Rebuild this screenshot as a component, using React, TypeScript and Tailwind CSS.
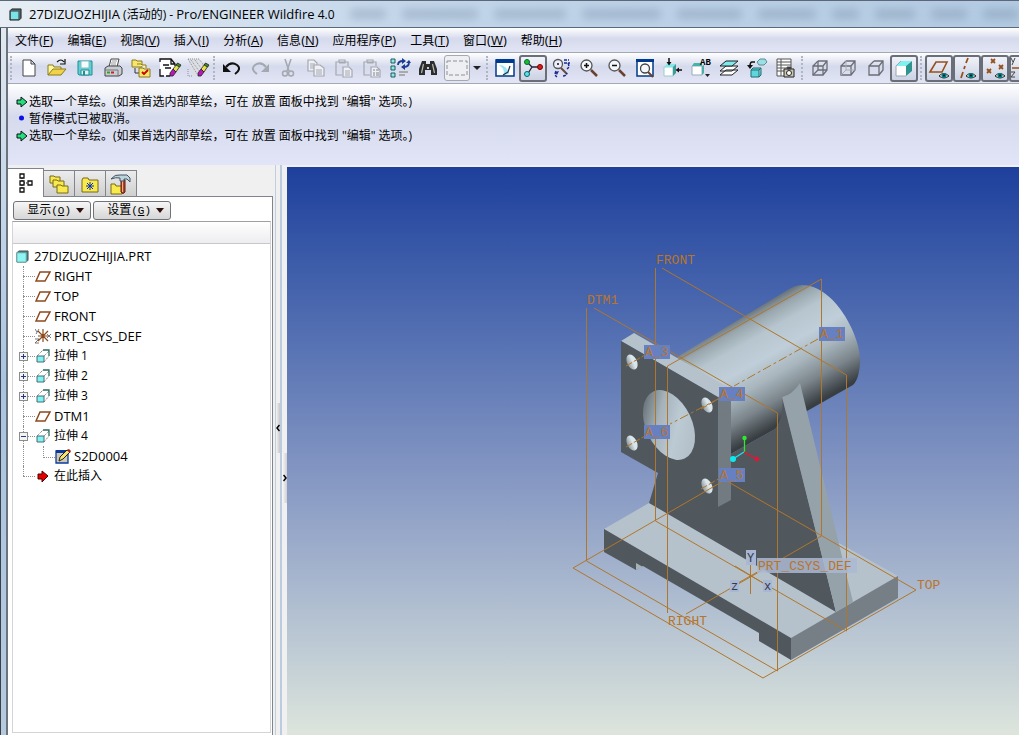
import React, { useState } from 'react';

type IconMap = Record<string, React.ReactNode>;

interface ToolItem {
  id: string;
  label: string;
  pressed?: boolean;
}

interface TreeItem {
  name: string;
  icon: string;
  expander?: '+' | '-';
  child?: boolean;
  last?: boolean;
}

const FONT = "font-['Open_Sans','Noto_Sans_CJK_SC',sans-serif]";

const eye = (
  <g stroke="none">
    <path d="M7 18q4.500-5 10 0q-5 4-10 0z" fill="#fff" stroke="#222" strokeWidth="1" />
    <circle cx="12" cy="17.500" r="2.600" fill="#008080" />
    <circle cx="12" cy="17.500" r="1" fill="#012" />
  </g>
);

const wireBox = (
  <path d="M3 8h10v9H3zM8 3h9v9l-4 5M3 8l5-5M13 8l4-5" fill="none" stroke="#6b6e75" strokeWidth="1.300" />
);

const marker = (
  <g strokeWidth="0.800">
    <path d="M14 11l4-5 3 2-4 6z" fill="#e8e24a" stroke="#222" />
    <path d="M11 15l3-4 3 3-3 4h-3z" fill="#b818b8" stroke="#222" />
    <path d="M17 7l1.500-2L22 7l-1.500 2z" fill="#3c8a2c" stroke="#222" />
  </g>
);

const clipboard = (
  <g fill="none" stroke="#a4a8b0" strokeWidth="1.200">
    <path d="M8 17H2V4h12v4M5 4V2h6v3H5" />
    <path d="M9 9h6l3 3v7H9z" fill="#eef0f5" />
  </g>
);

const icons: IconMap = {
  new: <path d="M4 2h8l4 4v12H4zM12 2v4h4" fill="#fff" stroke="#444" />,
  open: (
    <g>
      <path d="M1 17V7h5l1 2h7v3" fill="#fff6a0" stroke="#8b7b1c" />
      <path d="M1 17l5-6h13l-5 6z" fill="#f2d24a" stroke="#8b7b1c" />
      <path d="M10 4q4-4 7 0M18 1v5h-5" fill="none" stroke="#111" strokeWidth="1.200" />
    </g>
  ),
  save: (
    <g stroke="#1b8f94">
      <path d="M3 3h14v14H4l-1-1z" fill="#63cfd2" />
      <path d="M6 3h8v7H6z" fill="#f4fbfb" stroke="#8bc" />
      <path d="M6 12h8v5H6z" fill="#e8eef2" />
      <path d="M8 13h2v4H8z" fill="#1b8f94" stroke="none" />
    </g>
  ),
  print: (
    <g stroke="#444">
      <path d="M6 9l2-8h8l-2 8z" fill="#fff" />
      <path d="M9 3h5M8 5h5M8 7h5" stroke="#999" />
      <path d="M2 10l3-2h12l2 2v6l-3 2H2z" fill="#c9ccd4" />
      <path d="M2 12h13v6" fill="none" stroke="#777" />
      <path d="M4 14.500h3" stroke="#2a2" strokeWidth="2" />
      <path d="M8 14.500h3" stroke="#c22" strokeWidth="2" />
    </g>
  ),
  folders: (
    <g stroke="#8b7b1c">
      <path d="M1 2h4l1 1h5v6H1z" fill="#f7e66c" />
      <path d="M4 10v5h4" fill="none" stroke="#333" />
      <path d="M6 6h4l1 1h4v3" fill="#fff6a0" />
      <path d="M8 10h4l1 1h6v8H8z" fill="#f7e66c" />
      <path d="M11 14l2 2 4-4" fill="none" stroke="#c00" strokeWidth="1.800" />
    </g>
  ),
  sheetEdit: (
    <g>
      <path d="M1 1h11l4 5v3L9 18H1z" fill="#fff" />
      <path d="M1 4V1h11l4 5v2M12 1v5h4M1 11v7h4M4 7h6M6 10h6M7 18h4" fill="none" stroke="#111" strokeWidth="1.300" />
      {marker}
    </g>
  ),
  sheetErase: (
    <g>
      <path d="M1 1h11l4 5v3L9 18H6z" fill="#dcdee4" />
      <path d="M1 1h11l4 5v2M1 1l9 15M4 2l8 11M8 2l6 8M1 11v7h4" fill="none" stroke="#8d9099" strokeDasharray="1 1" />
      {marker}
    </g>
  ),
  undo: (
    <g>
      <path d="M4 9q5-6 11-2q5 4-2 9" fill="none" stroke="#111" strokeWidth="2" />
      <path d="M1 6v8h8z" fill="#111" />
    </g>
  ),
  redo: (
    <g>
      <path d="M16 9q-5-6-11-2q-5 4 2 9" fill="none" stroke="#a4a8b0" strokeWidth="2" />
      <path d="M19 6v8h-8z" fill="#a4a8b0" />
    </g>
  ),
  cut: (
    <g fill="none" stroke="#a4a8b0" strokeWidth="1.500">
      <path d="M7 1l4 12M13 1L9 13" />
      <circle cx="7" cy="15.500" r="2.500" />
      <circle cx="13" cy="15.500" r="2.500" />
    </g>
  ),
  copy: (
    <g fill="#eef0f5" stroke="#a4a8b0" strokeWidth="1.200">
      <path d="M2 2h6l3 3v8H2z" />
      <path d="M4 6h5M4 8h5M4 10h5" />
      <path d="M8 7h6l4 3v8H8z" />
      <path d="M10 12h6M10 14h6M10 16h6" />
    </g>
  ),
  paste: (
    <g>
      {clipboard}
      <path d="M11 13h5M11 15h5M11 17h5" stroke="#a4a8b0" />
    </g>
  ),
  pasteSpecial: (
    <g>
      {clipboard}
      <path d="M11 12h2M14 12h3M11 15h2M14 15h3M11 17h2M14 17h3" stroke="#a4a8b0" strokeWidth="1.500" />
    </g>
  ),
  regen: (
    <g>
      <path d="M1 1h4v4H1zM1 8h4v4H1zM1 15h4v4H1z" fill="#8fe6e6" stroke="#1d5c60" />
      <path d="M8 7q0-4 5-4M19 4q0 5-5 5" fill="none" stroke="#1a3c94" strokeWidth="1.800" />
      <path d="M12 0v6l4-3zM15 6v6l-4-3zM16 5h5l-2-3z" fill="#1a3c94" />
      <path d="M9 14h9M9 17h6" stroke="#999" strokeWidth="1.500" />
    </g>
  ),
  find: (
    <g>
      <path d="M4 3h4v3h4V3h4l3 8v6h-6v-5H7v5H1v-6z" fill="#2a2c2e" />
      <path d="M5.500 6l-2 9M14.500 6l2 9" stroke="#b9bbb0" strokeWidth="1.200" />
      <path d="M9 9h2v2H9z" fill="#c9cbc0" />
    </g>
  ),
  select: <path d="M0 3h20v14H0z" fill="none" stroke="#8d9099" strokeDasharray="4 2" />,
  repaint: (
    <g>
      <path d="M1 2h18v16H1z" fill="#fff" stroke="#003a8c" strokeWidth="1.500" />
      <path d="M1 1h18v4H1z" fill="#003a8c" />
      <path d="M4 7q8 0 10 9l-6 1q3-5-4-10z" fill="#9fe4f5" />
      <path d="M15 8l-2 6-5 3" fill="none" stroke="#234" strokeWidth="1.200" />
    </g>
  ),
  spin: (
    <g>
      <path d="M4 4l5 5M9 9h9M9 9l-5 8" fill="none" stroke="#223" strokeWidth="1.300" />
      <circle cx="4" cy="4" r="2.500" fill="#18c020" stroke="#064" />
      <circle cx="17" cy="9" r="2.500" fill="#e01818" stroke="#700" />
      <circle cx="4" cy="16" r="2.500" fill="#5fe0e6" stroke="#066" />
    </g>
  ),
  orient: (
    <g>
      <circle cx="7" cy="6" r="4.500" fill="#eef" stroke="#555" strokeWidth="1.300" />
      <circle cx="7" cy="6" r="1" fill="#111" />
      <path d="M10 10l6 6" stroke="#6a4a3a" strokeWidth="2" />
      <path d="M13 2h5M13 5h6M17 5q2 4-1 6M5 13q-2 4 1 6M12 18q3 0 4-3" fill="none" stroke="#1a2c94" strokeWidth="1.500" strokeDasharray="3 1" />
      <path d="M4 14l4-1-2 4z" fill="#1a2c94" />
    </g>
  ),
  zoomIn: (
    <g>
      <circle cx="7.500" cy="7.500" r="5.500" fill="#f4f7fb" stroke="#555" strokeWidth="1.300" />
      <path d="M5 7.500h5M7.500 5v5" stroke="#111" strokeWidth="1.500" />
      <path d="M12 12l6 6" stroke="#6a4030" strokeWidth="2.500" />
    </g>
  ),
  zoomOut: (
    <g>
      <circle cx="7.500" cy="7.500" r="5.500" fill="#f4f7fb" stroke="#555" strokeWidth="1.300" />
      <path d="M5 7.500h5" stroke="#111" strokeWidth="1.500" />
      <path d="M12 12l6 6" stroke="#6a4030" strokeWidth="2.500" />
    </g>
  ),
  refit: (
    <g>
      <path d="M2 2h16v16H2z" fill="#fff" stroke="#003a8c" strokeWidth="1.500" />
      <path d="M1 1h18v3H1z" fill="#003a8c" />
      <circle cx="10" cy="10.500" r="4.500" fill="#f4f7fb" stroke="#444" strokeWidth="1.300" />
      <path d="M13 14l5 5" stroke="#6a4030" strokeWidth="2" />
    </g>
  ),
  reorient: (
    <g>
      <path d="M1 9h9v9H1z" fill="#fff" stroke="#9cc" />
      <path d="M1 9l3-3h9l-3 3z" fill="#7fe9ec" />
      <path d="M10 9l3-3v9l-3 3z" fill="#3d9c98" />
      <path d="M6 0v6M19 12h-5" stroke="#111" strokeWidth="1.500" />
      <path d="M3.500 4h5L6 7.500zM16 9.500v5L12.500 12z" fill="#111" />
    </g>
  ),
  layers: (
    <g stroke="#222" strokeWidth="1">
      <path d="M1 17l6-5h12l-6 5zM1 13l6-5h12l-6 5z" fill="#fff" />
      <path d="M1 8l6-5h12l-6 5z" fill="#7fe9ec" />
    </g>
  ),
  viewManager: (
    <g>
      <path d="M8 4H5q-2 0-2 5" fill="none" stroke="#111" strokeWidth="1.600" />
      <path d="M0 7h6l-3 4z" fill="#111" />
      <path d="M10 4l3-3 5 0 2 3-3 3h-5z" fill="#9adfe3" stroke="#5c8d94" />
      <path d="M4 12h8v7H4zM4 12l2-2h8l-2 2M14 10v7l-2 2" fill="#5fd6dc" stroke="#1d6c70" />
    </g>
  ),
  snapshot: (
    <g stroke="#555">
      <path d="M2 1h14v17H2z" fill="#fff" />
      <path d="M2 4h14M2 7h14M2 10h14M2 13h14M6 1v17" />
      <path d="M9 11h10v8H9z" fill="#c9c7b4" stroke="#222" />
      <circle cx="14" cy="15" r="2.500" fill="#fff" stroke="#222" />
      <path d="M12 9h4v2h-4z" fill="#222" />
    </g>
  ),
  wireframe: (
    <g>
      {wireBox}
      <path d="M8 3v9h9M3 17l5-5" fill="none" stroke="#6b6e75" strokeWidth="1.300" />
    </g>
  ),
  hidden: (
    <g>
      {wireBox}
      <path d="M8 3v9h9M3 17l5-5" fill="none" stroke="#a9acb4" />
    </g>
  ),
  noHidden: wireBox,
  shaded: (
    <g>
      <path d="M2 8h10v10H2z" fill="#fff" />
      <path d="M2 8l5-5h11l-6 5z" fill="#7ff2f0" />
      <path d="M12 8l6-5v10l-6 5z" fill="#2e9490" />
      <path d="M12 18H2V8l5-5" fill="none" stroke="#9aa4b4" />
    </g>
  ),
  planes: (
    <g>
      <path d="M1 14L7 4h11l-5 10z" fill="none" stroke="#96501e" strokeWidth="1.600" />
      <g transform="translate(3 0)">{eye}</g>
    </g>
  ),
  axes: (
    <g>
      <path d="M11 0L9 5M8 8l-1 3M6 14l-2 6" fill="none" stroke="#96501e" strokeWidth="1.800" />
      <g transform="translate(2 0)">{eye}</g>
    </g>
  ),
  points: (
    <g>
      <path d="M6 1l4 4M10 1L6 5M2 11l4 4M6 11l-4 4M14 7l4 4M18 7l-4 4" stroke="#96501e" strokeWidth="1.800" />
      <g transform="translate(3 0)">{eye}</g>
    </g>
  ),
};

const fileTools: ToolItem[] = [
  { id: 'new', label: '新建' },
  { id: 'open', label: '打开' },
  { id: 'save', label: '保存' },
  { id: 'print', label: '打印' },
  { id: 'folders', label: '工作目录' },
  { id: 'sheetEdit', label: '拭除当前' },
  { id: 'sheetErase', label: '拭除不显示' },
];

const editTools: ToolItem[] = [
  { id: 'undo', label: '撤消' },
  { id: 'redo', label: '重做' },
  { id: 'cut', label: '剪切' },
  { id: 'copy', label: '复制' },
  { id: 'paste', label: '粘贴' },
  { id: 'pasteSpecial', label: '选择性粘贴' },
  { id: 'regen', label: '再生' },
  { id: 'find', label: '查找' },
];

const viewTools: ToolItem[] = [
  { id: 'repaint', label: '重画' },
  { id: 'spin', label: '旋转中心', pressed: true },
  { id: 'orient', label: '定向模式' },
  { id: 'zoomIn', label: '放大' },
  { id: 'zoomOut', label: '缩小' },
  { id: 'refit', label: '重新调整' },
  { id: 'reorient', label: '重定向' },
  { id: 'savedViews', label: '已命名视图' },
  { id: 'layers', label: '图层' },
  { id: 'viewManager', label: '视图管理器' },
  { id: 'snapshot', label: '快照' },
];

const displayTools: ToolItem[] = [
  { id: 'wireframe', label: '线框' },
  { id: 'hidden', label: '隐藏线' },
  { id: 'noHidden', label: '无隐藏线' },
  { id: 'shaded', label: '着色', pressed: true },
];

const datumTools: ToolItem[] = [
  { id: 'planes', label: '基准平面', pressed: true },
  { id: 'axes', label: '基准轴', pressed: true },
  { id: 'points', label: '基准点', pressed: true },
  { id: 'csys', label: '坐标系', pressed: true },
];

const menus: [string, string][] = [
  ['文件', 'F'], ['编辑', 'E'], ['视图', 'V'], ['插入', 'I'], ['分析', 'A'],
  ['信息', 'N'], ['应用程序', 'P'], ['工具', 'T'], ['窗口', 'W'], ['帮助', 'H'],
];

const messages = [
  { kind: 'prompt', text: '选取一个草绘。(如果首选内部草绘，可在 放置 面板中找到 "编辑" 选项。)' },
  { kind: 'info', text: '暂停模式已被取消。' },
  { kind: 'prompt', text: '选取一个草绘。(如果首选内部草绘，可在 放置 面板中找到 "编辑" 选项。)' },
];

const tree: TreeItem[] = [
  { name: 'RIGHT', icon: 'plane' },
  { name: 'TOP', icon: 'plane' },
  { name: 'FRONT', icon: 'plane' },
  { name: 'PRT_CSYS_DEF', icon: 'csys' },
  { name: '拉伸 1', icon: 'extrude', expander: '+' },
  { name: '拉伸 2', icon: 'extrude', expander: '+' },
  { name: '拉伸 3', icon: 'extrude', expander: '+' },
  { name: 'DTM1', icon: 'plane' },
  { name: '拉伸 4', icon: 'extrude', expander: '-' },
  { name: 'S2D0004', icon: 'sketch', child: true },
  { name: '在此插入', icon: 'insert', last: true },
];

const treeIcons: IconMap = {
  plane: <path d="M1 13L5 4h10l-5 9z" fill="none" stroke="#8c4a1c" strokeWidth="1.500" />,
  csys: (
    <g>
      <path d="M8 8V1M8 8l5 5M8 8l-5 5M3 3l5 5M8 8l5-5M8 8v6M3 8h10" stroke="#8c4a1c" strokeWidth="1.200" />
      <path d="M0 1l2 3M4 1L1 6M12 6l4 4M16 6l-4 4M0 11h4l-4 4h4" fill="none" stroke="#666" strokeWidth="0.900" />
    </g>
  ),
  extrude: (
    <g>
      <path d="M2 8h7v6H2z" fill="#7df3f3" stroke="#4a6a70" />
      <path d="M2 8l6-6M9 8l5-5M9 14l5-6" stroke="#666" strokeDasharray="1 1" fill="none" />
      <path d="M8 2h6v6" stroke="#2c6a5c" strokeWidth="1.300" fill="none" />
    </g>
  ),
  sketch: (
    <g>
      <path d="M1 3h12v12H1z" fill="#cfc9b4" stroke="#0a3aa0" strokeWidth="1.300" />
      <path d="M1 2h12v3H1z" fill="#0a3aa0" />
      <path d="M4 13l1-4 7-7 3 2-7 7z" fill="#f5e36a" stroke="#222" />
      <path d="M12 2l2-1 2 2-1 2z" fill="#b02020" />
    </g>
  ),
  insert: <path d="M3 6h4V3l6 5-6 6v-3H3z" fill="#e00000" stroke="#500" />,
};

const smudges = [40, 84, 80, 88, 72, 64, 30, 44, 40, 40];

const Icon = ({ children }: { children: React.ReactNode }) => (
  <svg viewBox="0 0 20 20" className="size-5 shrink-0 overflow-visible" aria-hidden="true">{children}</svg>
);

const ToolGlyph = ({ id }: { id: string }) => {
  if (id === 'savedViews') {
    return (
      <Icon>
        <path d="M1 8h10v9H1z" fill="#fff" stroke="#9ab" />
        <path d="M1 8l2-3h8v3zM11 8l2-1v8l-2 2z" fill="#4ab0ac" />
        <text x="9" y="7" fontSize="9" fontFamily="Liberation Mono" fontWeight="700">AB</text>
        <path d="M14 16h5l-2.500 3z" fill="#222" />
      </Icon>
    );
  }
  if (id === 'csys') {
    return (
      <Icon>
        <path d="M-2 0l2 4M2 0l-3 7M-2 14h4l-4 5h4" fill="none" stroke="#444" />
        <path d="M-1 10h14" stroke="#96501e" strokeWidth="1.500" />
      </Icon>
    );
  }
  return <Icon>{icons[id]}</Icon>;
};

const ToolGroup = ({ items }: { items: ToolItem[] }) => (
  <div className="flex shrink-0">
    {items.map(t => (
      <button
        key={t.id}
        aria-label={t.label}
        aria-pressed={t.pressed}
        className={`flex h-[27px] w-7 items-center justify-center rounded-[3px] border-2 ${t.pressed ? 'border-[#6a6e78] bg-linear-to-b from-[#f0f2f8] to-[#ccd2e4]' : 'border-transparent'}`}
      >
        <ToolGlyph id={t.id} />
      </button>
    ))}
  </div>
);

const Separator = () => <div className="ml-[2px] mr-[3px] h-6 w-[2px] shrink-0 border-l-2 border-dotted border-[#b0b5c4]" />;

const TitleBar = () => (
  <header className="relative flex h-7 shrink-0 items-center gap-[7px] overflow-hidden border-y border-[#5c6878] bg-linear-to-r from-[#e6edf4] via-[#c3d6ea] via-40% to-[#b2cae2] pl-[9px]">
    <div className="absolute inset-y-0 right-0 left-[350px] flex items-center gap-4 opacity-35 blur-[4px]" aria-hidden="true">
      {smudges.map((w, i) => (
        <span key={i} className="h-[10px] rounded bg-[#70859f]" style={{ width: w }} />
      ))}
    </div>
    <svg viewBox="0 0 14 14" className="size-[13px]" aria-hidden="true">
      <path d="M1 3l2-2h10v10l-2 2H1z" fill="#4d6468" stroke="#222" />
      <path d="M2 4h8v8H2z" fill="#79e4e6" />
    </svg>
    <h1 className="relative text-[12px] leading-5 text-black">
      <span className="text-[13px]">27DIZUOZHIJIA</span> (活动的) - <span className="text-[13px]">Pro/ENGINEER Wildfire</span> 4.0
    </h1>
  </header>
);

const MenuBar = () => (
  <nav className="flex h-6 shrink-0 items-center bg-linear-to-b from-white via-[#d5daec] via-45% to-[#e2e5f5]">
    {menus.map(([name, key]) => (
      <button key={name} className="px-[7px] text-[12px] leading-5 whitespace-nowrap text-black">
        {name}<span className="text-[13px]">(<u>{key}</u>)</span>
      </button>
    ))}
  </nav>
);

const Toolbar = () => (
  <div className="flex h-8 shrink-0 items-center overflow-hidden border-y border-[#a4a8b4] bg-linear-to-b from-white via-[#d5daec] via-45% to-[#e2e5f5]">
    <Separator />
    <ToolGroup items={fileTools} />
    <Separator />
    <ToolGroup items={editTools} />
    <button aria-label="选取框" className="ml-[2px] flex size-[26px] shrink-0 items-center justify-center rounded-[3px] border border-[#a4a8b0] bg-[#eeeff3]">
      <ToolGlyph id="select" />
    </button>
    <button aria-label="选取选项" className="flex h-6 w-[14px] shrink-0 items-center justify-center">
      <span className="border-x-4 border-t-4 border-x-transparent border-t-[#222]" />
    </button>
    <Separator />
    <ToolGroup items={viewTools} />
    <Separator />
    <ToolGroup items={displayTools} />
    <Separator />
    <ToolGroup items={datumTools} />
  </div>
);

const MessageLog = () => (
  <section className="h-[81px] shrink-0 bg-linear-to-b from-white via-[#d5daec] via-40% to-[#e2e5f8] pt-[9px] pl-2">
    <ul>
      {messages.map((m, i) => (
        <li key={i} className="flex h-[17px] items-center gap-[1px] text-[12px] text-black">
          <svg viewBox="0 0 12 12" className="size-3 shrink-0" aria-hidden="true">
            {m.kind === 'prompt'
              ? <path d="M1 4h4V1l6 5-6 5V8H1z" fill="#1fe07c" stroke="#111" />
              : <circle cx="5.500" cy="5" r="2.500" fill="#0a10e8" />}
          </svg>
          <span className="whitespace-nowrap">{m.text}</span>
        </li>
      ))}
    </ul>
  </section>
);

const Tab = ({ label, active, onClick, children }: any) => (
  <button
    role="tab"
    aria-label={label}
    aria-selected={active}
    onClick={onClick}
    className={`flex items-center justify-center border-t border-r border-[#80848c] ${active ? 'h-[29px] w-[36px] bg-white' : 'h-[27px] w-[31px] border-b bg-linear-to-b from-[#ececec] to-[#cfcfcf]'}`}
  >
    <Icon>{children}</Icon>
  </button>
);

const DropButton = ({ name, hotkey }: { name: string; hotkey: string }) => (
  <button className="flex h-[19px] w-[78px] items-center justify-end gap-[5px] rounded-[3px] border border-[#70747a] bg-linear-to-b from-[#f6f6f6] to-[#d6d6d6] pr-[6px] text-[12px] leading-4 whitespace-nowrap text-black">
    <span>{name}<span className="font-['Liberation_Mono',monospace] text-[11px]">(<u>{hotkey}</u>)</span></span>
    <span className="border-x-4 border-t-[5px] border-x-transparent border-t-[#2c1010]" />
  </button>
);

const TreeRow = ({ item }: { item: TreeItem }) => (
  <li className="flex h-5 items-center pl-[10px]">
    <span className="relative h-5 w-3 shrink-0">
      <span className={`absolute top-0 left-0 border-l border-dotted border-[#909090] ${item.last ? 'h-[10px]' : 'h-5'}`} />
      {!item.child && <span className="absolute top-[10px] left-0 w-3 border-t border-dotted border-[#909090]" />}
      {item.expander && (
        <button aria-label={item.name} className="absolute top-[6px] -left-1 size-[9px] border border-[#8c8c8c] bg-[#f4f4f4]">
          <span className="absolute top-[3px] left-[1px] h-px w-[5px] bg-[#223a80]" />
          {item.expander === '+' && <span className="absolute top-[1px] left-[3px] h-[5px] w-px bg-[#223a80]" />}
        </button>
      )}
    </span>
    {item.child && <span className="mb-[8px] ml-2 h-3 w-3 shrink-0 border-b border-l border-dotted border-[#909090]" />}
    <svg viewBox="0 0 16 16" className="size-4 shrink-0" aria-hidden="true">{treeIcons[item.icon]}</svg>
    <span className={`ml-[3px] whitespace-nowrap ${/^[A-Z]/.test(item.name) ? 'text-[13px]' : 'text-[12px]'}`}>{item.name}</span>
  </li>
);

const Navigator = () => {
  const [tab, setTab] = useState(0);
  return (
    <aside className="flex w-[265px] shrink-0 flex-col">
      <div role="tablist" className="mt-[3px] flex items-end">
        <Tab label="模型树" active={tab === 0} onClick={() => setTab(0)}>
          <path d="M4 1h4v4H4zM4 8h4v4H4zM4 15h4v4H4zM12 8h4v4h-4z" fill="#fff" stroke="#111" strokeWidth="1.300" />
          <path d="M6 5v3M6 12v3M8 10h4" stroke="#111" strokeDasharray="1 1" />
        </Tab>
        <Tab label="文件夹" active={tab === 1} onClick={() => setTab(1)}>
          <g fill="#f8ea4c" stroke="#77691a">
            <path d="M1 2h4l1 1h5v6H1z" />
            <path d="M4 6h4l1 1h6v6H4z" />
            <path d="M8 11h4l1 1h6v7H8z" />
          </g>
        </Tab>
        <Tab label="收藏夹" active={tab === 2} onClick={() => setTab(2)}>
          <path d="M2 6l1-2h5l1 2h9v12H2z" fill="#f8ea4c" stroke="#77691a" />
          <path d="M10 8v8M6 12h8M7 9l6 6M13 9l-6 6" stroke="#0a30b0" />
        </Tab>
        <Tab label="连接" active={tab === 3} onClick={() => setTab(3)}>
          <path d="M0 10h4l1 2h6v8H0z" fill="#f8ea4c" stroke="#77691a" />
          <path d="M10 6h4v12q-2 3-4 0z" fill="#b8432c" stroke="#5c1c10" />
          <path d="M11.500 7v11" stroke="#f0b080" />
          <path d="M0 5q4-5 9-4h7l3 3v4l-3-3h-3v2h-4V4q-4-1-9 1z" fill="#bcd4dc" stroke="#456" />
        </Tab>
      </div>
      <div className="-mt-px flex flex-1 flex-col border-r border-[#80848c] bg-white pr-[1px] pb-[2px] pl-1">
        <div className="-mx-[1px] ml-[31px] border-t border-[#80848c]" />
        <div className="mt-[4px] ml-[1px] flex gap-[2px]">
          <DropButton name="显示" hotkey="O" />
          <DropButton name="设置" hotkey="G" />
        </div>
        <div className="mt-[1px] flex-1 border border-[#d4d4d6] border-t-[#a0a0a0]">
          <div className="h-[22px] border-b border-[#c8c8cc] bg-linear-to-b from-white to-[#ededf0]" />
          <ul className="pt-[2px] text-[13px] leading-5 text-black">
            <li className="flex h-5 items-center gap-[5px] pl-[3px]">
              <svg viewBox="0 0 14 14" className="size-[13px]" aria-hidden="true">
                <path d="M1 3l2-2h10v10l-2 2H1z" fill="#3f7f80" stroke="#555" />
                <path d="M1 3h10v10H1z" fill="#8ff6f4" stroke="#6aa" />
              </svg>
              <span>27DIZUOZHIJIA.PRT</span>
            </li>
            {tree.map(item => <TreeRow key={item.name} item={item} />)}
          </ul>
        </div>
      </div>
    </aside>
  );
};

const Sash = () => (
  <div className="ml-[2px] flex w-3 shrink-0 border-l border-[#c0cedd] pt-[3px]">
    <div className="flex w-1 flex-col pt-[235px]">
      <button aria-label="收起导航器" className="flex h-[50px] w-1 items-center bg-linear-to-r from-[#f4f4f4] to-[#c8c8cc]">
        <svg viewBox="0 0 4 8" className="h-2 w-1" aria-hidden="true"><path d="M3.500 1L1 4l2.500 3" fill="none" stroke="#000" strokeWidth="1.500" /></svg>
      </button>
    </div>
    <div className="-mt-[3px] flex w-[7px] flex-col border-l-2 border-[#bccce0] pt-[288px]">
      <button aria-label="展开浏览器" className="flex h-[50px] w-[5px] items-center bg-linear-to-r from-[#fafafa] to-[#d0d0d4] pl-[1px]">
        <svg viewBox="0 0 4 8" className="h-2 w-1" aria-hidden="true"><path d="M0.500 1L3 4L0.500 7" fill="none" stroke="#000" strokeWidth="1.500" /></svg>
      </button>
    </div>
  </div>
);

const holes = [[632, 362], [707, 405], [632, 443], [707, 486]];

const axisTags: [string, number, number][] = [
  ['A_3', 644, 345], ['A_4', 719, 387], ['A_6', 644, 425], ['A_5', 719, 468], ['A_1', 819, 327],
];

const Model = () => (
  <svg viewBox="287 167 732 568" preserveAspectRatio="xMinYMin meet" className="h-full w-full" role="img" aria-label="27DIZUOZHIJIA">
    <defs>
      <linearGradient id="tube" gradientUnits="userSpaceOnUse" x1="740" y1="318" x2="795" y2="415">
        <stop offset="0" stopColor="#6c777d" />
        <stop offset="0.080" stopColor="#98a5ac" />
        <stop offset="0.220" stopColor="#b6c5ce" />
        <stop offset="0.420" stopColor="#bfced8" />
        <stop offset="0.600" stopColor="#a9b6be" />
        <stop offset="0.800" stopColor="#7b858b" />
        <stop offset="1" stopColor="#383e42" />
      </linearGradient>
      <linearGradient id="bore" gradientUnits="userSpaceOnUse" x1="645" y1="404" x2="690" y2="440">
        <stop offset="0" stopColor="#646e74" />
        <stop offset="0.350" stopColor="#a5b2ba" />
        <stop offset="0.700" stopColor="#bccad4" />
        <stop offset="1" stopColor="#b4c1ca" />
      </linearGradient>
      <linearGradient id="bolt" x1="0" y1="0" x2="1" y2="0">
        <stop offset="0" stopColor="#8c979d" />
        <stop offset="0.600" stopColor="#dbe5ec" />
      </linearGradient>
    </defs>

    {/* base plate */}
    <path d="M604 529L649 503L825 548L839 543L898 576L791 638z" fill="#b5c2cc" />
    <path d="M604 529L791 638V660L759 641V633L643 566L636 570L604 552z" fill="#50585e" />
    <path d="M636 563L643 567L636 570z" fill="#a5b0b8" />
    <path d="M791 638L898 576V598L791 660z" fill="#767f86" />

    {/* tube */}
    <path d="M677 357L786 291Q795 285 802 285C818 285 834 298 845 316C856 334 861 352 860 364C859 375 857 381 853 385L731 454L718 400z" fill="url(#tube)" />

    {/* rib */}
    <path d="M658 473L649 503L836 612L782 395Q785 415 775 429L731 454L700 460z" fill="#50585e" />
    <path d="M782 397Q792 395 800 383L853 602L836 612z" fill="#96a2aa" />

    {/* flange */}
    <path d="M621 341L634 333L731 389L718 397z" fill="#b5c2cc" />
    <path d="M718 397L731 389V500L718 507z" fill="#727b81" />
    <path d="M621 341L718 397V507L621 452z" fill="#50585e" />
    <ellipse cx="669" cy="425" rx="23" ry="37" transform="rotate(-25 669 425)" fill="url(#bore)" />
    {holes.map(([x, y]) => (
      <ellipse key={`${x}-${y}`} cx={x} cy={y} rx="5" ry="8" transform={`rotate(-25 ${x} ${y})`} fill="url(#bolt)" />
    ))}

    {/* datum planes */}
    <g fill="none" stroke="#b0762a" strokeWidth="1">
      <path d="M655.500 268V521L846.500 631V375L662 268" />
      <path d="M586.500 308V561L777.500 671V413L594 308" />
      <path d="M667.500 613V366L821.500 279V536L686 614" />
      <path d="M725 480L573 568L763 678L916 590z" />
      <path d="M818 339L734 386M720 398L670 424" strokeDasharray="9 3 3 3" />
      <path d="M626 366L645 355M626 447L645 436M701 409L720 398M701 489L720 478" strokeDasharray="7 2" />
      <path d="M750.500 557V594M735 566L768 586M731 587L768 566" />
    </g>

    {/* axis tags */}
    <g fontFamily="Liberation Mono, monospace" fontSize="13" fill="#b8752a">
      {axisTags.map(([t, x, y]) => (
        <g key={t}>
          <rect x={x} y={y} width="26" height="14" fill="#6680c2" />
          <text x={x + 1} y={y + 11}>{t}</text>
        </g>
      ))}
      <rect x="757" y="558" width="100" height="15" fill="#aab8d2" fillOpacity="0.850" />
      <text x="758" y="570">PRT_CSYS_DEF</text>
      <text x="656" y="264">FRONT</text>
      <text x="587" y="304">DTM1</text>
      <text x="668" y="625">RIGHT</text>
      <text x="917" y="589">TOP</text>
    </g>
    <g fontFamily="Liberation Mono, monospace" fontSize="12" fill="#333a44">
      <rect x="746" y="550" width="10" height="15" fill="#a9b6d4" />
      <rect x="730" y="580" width="9" height="12" fill="#a9b6d4" />
      <rect x="763" y="580" width="9" height="12" fill="#a9b6d4" />
      <text x="747" y="562">Y</text>
      <text x="731" y="590">z</text>
      <text x="764" y="590">x</text>
    </g>

    {/* spin centre */}
    <g strokeWidth="1.300">
      <path d="M744.500 452V438" stroke="#30e830" />
      <path d="M744 452L733 459" stroke="#10e8f0" />
      <path d="M744 452L756 459" stroke="#f01030" />
      <circle cx="744.500" cy="438" r="2.200" fill="#30e830" />
      <circle cx="733" cy="459" r="3" fill="#10e8f0" />
      <circle cx="757" cy="459" r="2.200" fill="#f01030" />
    </g>
  </svg>
);

export default function App() {
  return (
    <div className={`flex h-screen flex-col overflow-hidden bg-[#f0f0f0] ${FONT}`}>
      <TitleBar />
      <div className="flex min-h-0 flex-1">
        <div className="w-2 shrink-0 border-r-2 border-l border-r-[#6b737c] border-l-[#3c4048] bg-linear-to-b from-[#e0e8f0] via-[#a9c4e2] to-[#b6cade]" />
        <div className="flex min-w-0 flex-1 flex-col">
          <MenuBar />
          <Toolbar />
          <MessageLog />
          <div className="flex min-h-0 flex-1">
            <Navigator />
            <Sash />
            <main className="mt-[2px] min-w-0 flex-1 bg-linear-to-b from-[#1e3f9c] via-[#8093c1] via-52% to-[#dde5dc]">
              <Model />
            </main>
          </div>
        </div>
      </div>
    </div>
  );
}
